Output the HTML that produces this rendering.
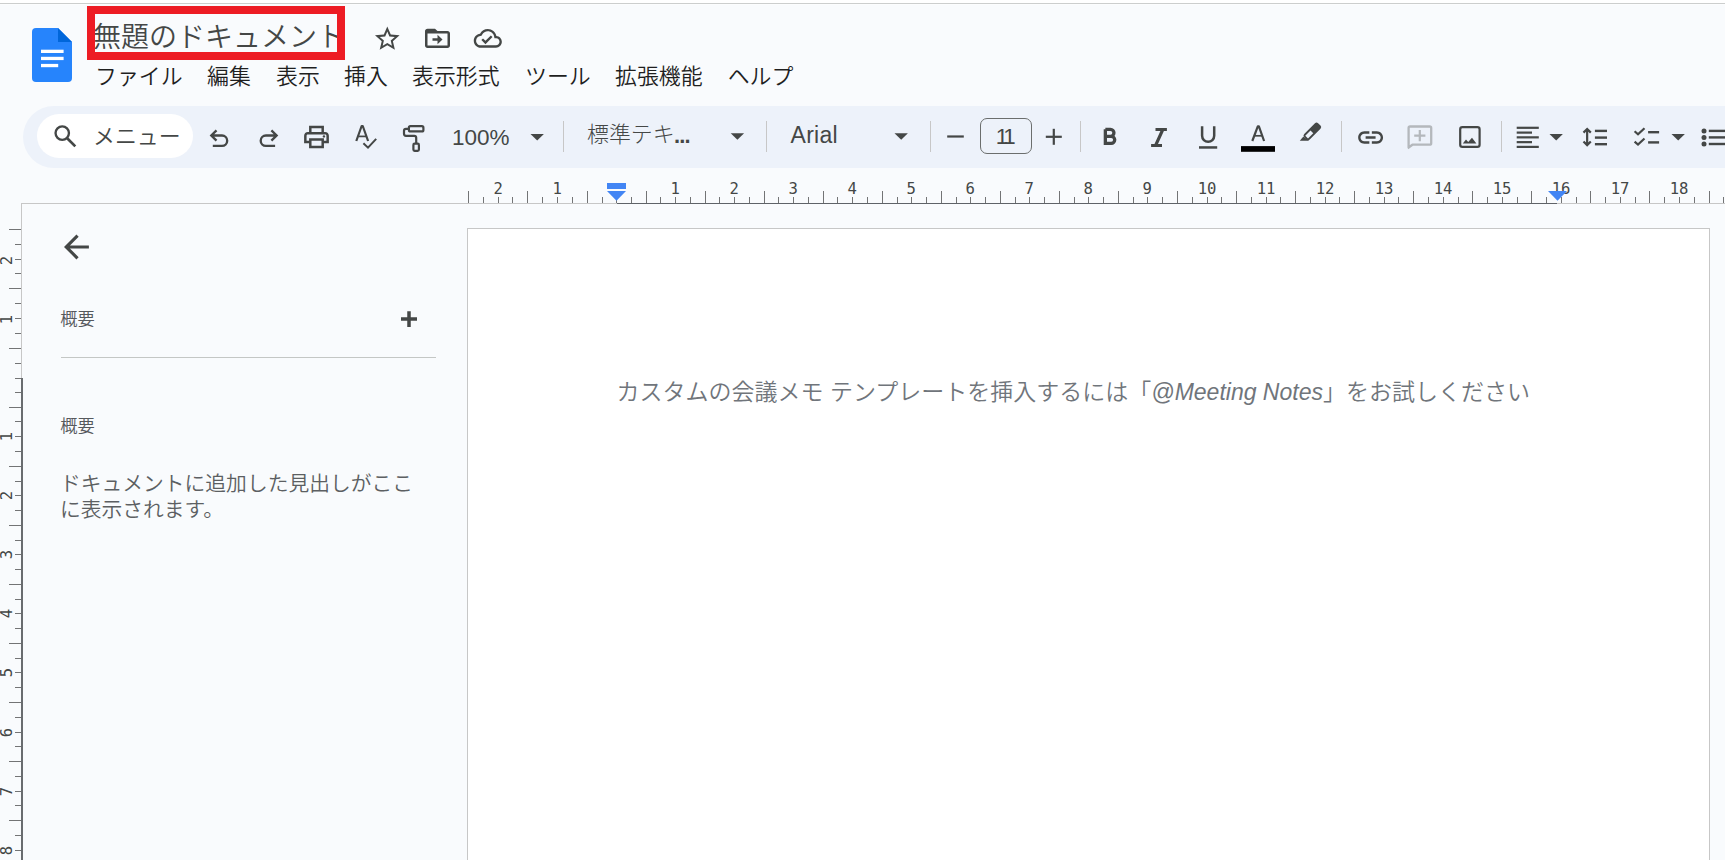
<!DOCTYPE html>
<html lang="ja">
<head>
<meta charset="utf-8">
<title>無題のドキュメント - Google ドキュメント</title>
<style>
html,body{margin:0;padding:0;}
body{width:1725px;height:860px;overflow:hidden;background:#f9fbfd;position:relative;
 font-family:"Liberation Sans","Noto Sans CJK JP",sans-serif;color:#444746;}
.abs{position:absolute;}
#topwhite{left:0;top:0;width:1725px;height:3px;background:#fff;}
#topline{left:0;top:3px;width:1725px;height:1px;background:#cccecd;box-shadow:0 1px 0 #fcfdfe;}
#title{left:93px;top:18.7px;height:38px;line-height:38px;font-size:28px;white-space:nowrap;color:#444746;font-weight:350;width:244px;overflow:hidden;}
#redbox{left:87px;top:6px;width:242px;height:38px;border:8px solid #ed1c24;}
.menu{top:60.5px;height:32px;line-height:32px;font-size:21.9px;white-space:nowrap;color:#1f1f1f;font-weight:350;}
#toolbar{left:22.5px;top:106px;width:1760px;height:62px;border-radius:31px;background:#edf2fa;}
#search{left:37px;top:114px;width:156px;height:44px;border-radius:22px;background:#fff;}
#searchtxt{left:93px;top:115.3px;height:44px;line-height:44px;font-size:21.9px;white-space:nowrap;font-weight:350;color:#444746;width:88px;overflow:hidden;}
.tsep{top:121px;width:1px;height:31px;background:#c7c7c7;}
.tbtxt{top:114px;height:44px;line-height:44px;font-size:21.9px;white-space:nowrap;color:#444746;}
#fsbox{left:980px;top:118px;width:52px;height:35.5px;border:1.3px solid #444746;border-radius:7px;box-sizing:border-box;text-align:center;line-height:36.4px;font-size:22.3px;letter-spacing:-3.2px;text-indent:-4px;color:#444746;border-color:#6b6e6d;}
#page{left:467px;top:228px;width:1243px;height:700px;background:#fff;border:1px solid #c7c7c7;box-sizing:border-box;}
#hline{left:21px;top:203px;width:1710px;height:1px;background:#c7c7c7;}
#hdark{left:617px;top:203px;width:940px;height:1px;background:#5f6368;}
#vline{left:21px;top:203px;width:1px;height:700px;background:#c7c7c7;}
#vdark{left:21px;top:378px;width:2px;height:500px;background:#696c6f;}
.ptxt{white-space:nowrap;color:#444746;font-weight:300;}
#placeholder{left:616.6px;top:372.9px;height:38px;line-height:38px;font-size:23.01px;white-space:nowrap;color:#70757b;font-weight:350;}
#placeholder i{font-style:italic;font-weight:400;}
svg{position:absolute;left:0;top:0;overflow:visible;}
</style>
</head>
<body>
<div class="abs" id="topwhite"></div>
<div class="abs" id="topline"></div>

<!-- docs logo -->
<svg width="1725" height="110" viewBox="0 0 1725 110" style="left:0.6px;top:0.4px">
  <path d="M35 28 H57 L71 42 V78 a4 4 0 0 1 -4 4 H35 a4 4 0 0 1 -4 -4 V32 a4 4 0 0 1 4 -4 Z" fill="#2684fc"/>
  <path d="M57 28 L71 42 H57 Z" fill="#0066da"/>
  <rect x="40" y="49.7" width="22.6" height="3.3" fill="#fff"/>
  <rect x="40" y="56.8" width="22.6" height="3.3" fill="#fff"/>
  <rect x="40" y="63.9" width="17.2" height="3.3" fill="#fff"/>
</svg>

<div class="abs" id="title">無題のドキュメント</div>
<div class="abs" id="redbox"></div>

<div class="abs menu" style="left:95px">ファイル</div>
<div class="abs menu" style="left:207px">編集</div>
<div class="abs menu" style="left:276px">表示</div>
<div class="abs menu" style="left:344px">挿入</div>
<div class="abs menu" style="left:412px">表示形式</div>
<div class="abs menu" style="left:525px">ツール</div>
<div class="abs menu" style="left:615px">拡張機能</div>
<div class="abs menu" style="left:727.7px">ヘルプ</div>

<div class="abs" id="toolbar"></div>
<div class="abs" id="search"></div>
<div class="abs" id="searchtxt">メニュー</div>
<div class="abs tbtxt" style="left:452px;top:115.6px;font-size:22.5px;letter-spacing:0px">100%</div>
<div class="abs tsep" style="left:563px"></div>
<div class="abs tbtxt" style="left:587px;top:113px;font-weight:300">標準テキ<span style="font-weight:700;letter-spacing:-0.9px;margin-left:-0.5px;position:relative;top:1.2px">...</span></div>
<div class="abs tsep" style="left:766px"></div>
<div class="abs tbtxt" style="left:790.5px;font-size:23px;top:113.2px;letter-spacing:0.3px">Arial</div>
<div class="abs tsep" style="left:930px"></div>
<div class="abs" id="fsbox">11</div>
<div class="abs tsep" style="left:1080px"></div>
<div class="abs tsep" style="left:1341px"></div>
<div class="abs tsep" style="left:1501px"></div>

<!-- ICONS -->
<svg id="icons" width="1725" height="400" viewBox="0 0 1725 400"><g fill="#444746">
<!-- star -->
<g transform="translate(387.3,38.1) scale(1.23) translate(-12,-11.5)"><path d="M22 9.24l-7.19-.62L12 2 9.19 8.63 2 9.24l5.46 4.73L5.82 21 12 17.27 18.18 21l-1.63-7.03L22 9.24zM12 15.4l-3.76 2.27 1-4.28-3.32-2.88 4.38-.38L12 6.1l1.71 4.04 4.38.38-3.32 2.88 1 4.28L12 15.4z"/></g>
<!-- folder move -->
<g transform="translate(437.5,38.3) scale(1.25,1.2) translate(-12,-12)"><path d="M20 6h-8l-2-2H4c-1.1 0-1.99.9-1.99 2L2 18c0 1.1.9 2 2 2h16c1.1 0 2-.9 2-2V8c0-1.1-.9-2-2-2zm0 12H4V8h16v10zm-7.99-1l4-4-4-4v3H8v2h4.01z"/></g>
<!-- cloud done -->
<g transform="translate(487.8,38.3) scale(1.17) translate(-12,-12)"><path d="M19.35 10.04C18.67 6.59 15.64 4 12 4 9.11 4 6.6 5.64 5.35 8.04 2.34 8.36 0 10.91 0 14c0 3.31 2.69 6 6 6h13c2.76 0 5-2.24 5-5 0-2.64-2.05-4.78-4.65-4.96zM19 18H6c-2.21 0-4-1.79-4-4 0-2.05 1.53-3.76 3.56-3.97l1.07-.11.5-.95C8.08 7.14 9.94 6 12 6c2.62 0 4.88 1.86 5.39 4.43l.3 1.5 1.53.11c1.56.1 2.78 1.41 2.78 2.96 0 1.65-1.35 3-3 3zm-9-3.82l-2.09-2.09L6.5 13.5 10 17l6.01-6.01-1.41-1.41z"/></g>
<!-- print -->
<g transform="translate(316.5,137) scale(1.24) translate(-12,-12)"><path d="M19 8h-1V3H6v5H5c-1.66 0-3 1.34-3 3v6h4v4h12v-4h4v-6c0-1.66-1.34-3-3-3zM8 5h8v3H8V5zm8 12v2H8v-4h8v2zm2-2v-2H6v2H4v-4c0-.55.45-1 1-1h14c.55 0 1 .45 1 1v4h-2z"/><circle cx="18" cy="11.5" r="1"/></g>
<!-- link -->
<g transform="translate(1370.6,137.5) scale(1.245) translate(-12,-12)"><path d="M3.9 12c0-1.71 1.39-3.1 3.1-3.1h4V7H7c-2.76 0-5 2.24-5 5s2.24 5 5 5h4v-1.9H7c-1.71 0-3.1-1.39-3.1-3.1zM8 13h8v-2H8v2zm9-6h-4v1.9h4c1.71 0 3.1 1.39 3.1 3.1s-1.39 3.1-3.1 3.1h-4V17h4c2.76 0 5-2.24 5-5s-2.24-5-5-5z"/></g>
<!-- align left -->
<rect x="1516.700" y="126.70" width="22.1" height="2.200"/><rect x="1516.700" y="131.50" width="15.3" height="2.200"/><rect x="1516.700" y="136.25" width="22.1" height="2.200"/><rect x="1516.700" y="141.05" width="15.3" height="2.200"/><rect x="1516.700" y="145.80" width="22.1" height="2.200"/>
<!-- B I U -->
<path d="M1105.350 129.300 V143.350 H1111.200 a3.525 3.525 0 0 0 0 -7.050 H1105.350 M1110.450 136.300 a3.500 3.500 0 0 0 0 -7 H1105.350" fill="none" stroke="#444746" stroke-width="3.300" stroke-linejoin="miter"/>
<path d="M1155.500 128.100 H1166.900 V131.100 H1163.900 L1158 143.900 H1162 V146.900 H1151.100 V143.900 H1154.500 L1160.400 131.100 H1155.500 Z"/>
<path d="M1202.1 126.200 V135.800 a6.050 6.050 0 0 0 12.100 0 V126.200" fill="none" stroke="#444746" stroke-width="2.500"/>
<rect x="1199" y="146.200" width="18.200" height="2.500"/>
<!-- dropdown arrows -->
<path d="M530.500 134 h13.400 l-6.700 6.500z"/>
<path d="M730.700 133.300 h13.400 l-6.700 6.500z"/>
<path d="M894.500 133.300 h13.400 l-6.700 6.500z"/>
<path d="M1549.500 134 h13.400 l-6.700 6.500z"/>
<path d="M1671.500 134 h13.400 l-6.700 6.500z"/>
<!-- minus plus -->
<rect x="947.200" y="135.400" width="16.600" height="2.200"/>
<rect x="1045.800" y="135.700" width="16" height="2.200"/><rect x="1052.700" y="128.800" width="2.200" height="16"/>
<!-- highlighter -->
<g transform="translate(1312.350,131.300) rotate(-45)"><rect x="-9.800" y="-3.900" width="19.600" height="7.800" rx="2.200"/><rect x="-8.100" y="-1.950" width="7.400" height="3.900" fill="#edf2fa"/></g>
<path d="M1299.800 140.800 H1309.100 L1303.400 136.400z"/>
<!-- bullets list -->
<circle cx="1704" cy="130.900" r="2.500"/><circle cx="1704" cy="137.400" r="2.500"/><circle cx="1704" cy="144" r="2.500"/>
<rect x="1708.800" y="129.700" width="20" height="2.400"/><rect x="1708.800" y="136.200" width="20" height="2.400"/><rect x="1708.800" y="142.800" width="20" height="2.400"/>
<!-- text color bar -->
<rect x="1241" y="146.100" width="34" height="5.700" fill="#000"/>
<!-- line spacing lines, checklist lines -->
<rect x="1594.900" y="129.700" width="12.100" height="2.400"/><rect x="1594.900" y="136.400" width="12.100" height="2.400"/><rect x="1594.900" y="143" width="12.100" height="2.400"/>
<rect x="1648.100" y="131" width="11" height="2.400"/><rect x="1648.100" y="141.200" width="11" height="2.400"/>
</g>
<g fill="none" stroke="#444746" stroke-width="2.350">
<!-- search -->
<circle cx="62.250" cy="133.100" r="6.700"/><path d="M67.200 138.200 L75.300 146.400" stroke-width="2.700"/>
<!-- undo redo -->
<path d="M216.500 130.400 L211.300 135.500 L216.500 140.700 M211.800 135.500 H222 a5.200 5.200 0 0 1 0 10.400 H212.800"/>
<path d="M271.400 130.400 L276.600 135.500 L271.400 140.700 M276.100 135.500 H265.900 a5.200 5.200 0 0 0 0 10.400 H275.100"/>
<!-- spellcheck -->
<path d="M356.300 141 L361.650 126 H362.750 L368.100 141" stroke-width="2.200" stroke-linejoin="round"/><path d="M358.300 136.400 H366.100" stroke-width="1.700"/>
<path d="M363.400 143.200 L368 147.600 L376.200 138.900" stroke-width="2"/>
<!-- paint roller -->
<rect x="408.900" y="126.200" width="14.500" height="5.200" rx="1.500" stroke-width="2.200"/>
<path d="M408.900 128.800 H406 a2 2 0 0 0 -2 2 V133.800 a2 2 0 0 0 2 2 H414.200 a2 2 0 0 1 2 2 V143" stroke-width="2.200"/>
<rect x="413.400" y="143.700" width="5.500" height="7.100" rx="1.200" stroke-width="2.200"/>
<!-- text color A -->
<path d="M1252.300 141 L1257.800 126.400 H1258.900 L1264.100 141" stroke-width="2.200" stroke-linejoin="round"/><path d="M1254.600 135.800 H1262" stroke-width="1.700"/>
<!-- image -->
<rect x="1460.200" y="127.200" width="19.400" height="19.700" rx="2.200" stroke-width="2.200"/>
<!-- line spacing arrows -->
<path d="M1587.150 129.500 V144.600 M1583.500 132.600 L1587.150 129 L1590.800 132.600 M1583.500 141.500 L1587.150 145.100 L1590.800 141.500" stroke-width="2.200"/>
<!-- checklist checks -->
<path d="M1634.600 131.300 L1638 134.300 L1644.500 128.200 M1634.600 141.600 L1638 144.600 L1644.500 138.500" stroke-width="2.200"/>
</g>
<!-- image mountains -->
<path d="M1462.800 143.500 L1466 139.500 L1468.200 142.100 L1472 137.700 L1476.400 143.500z" fill="#444746"/>
<!-- add comment (disabled) -->
<g fill="none" stroke="#b4b8bc" stroke-width="2.300">
<path d="M1408.600 147.500 V128 a1.500 1.500 0 0 1 1.500 -1.500 H1429.700 a1.500 1.500 0 0 1 1.500 1.500 V143.200 a1.500 1.500 0 0 1 -1.500 1.500 H1412.400 Z" stroke-linejoin="round"/>
<path d="M1414.200 135.600 H1425.400 M1419.800 130 V141.200" stroke-width="2.200"/><path d="M1408 145 V149.200 L1412.400 145 Z" fill="#b4b8bc" stroke="none"/>
</g>
<!-- back arrow, plus in panel -->
<g transform="translate(76.450,246.950) scale(1.5560) translate(-12,-12)"><path fill="#444746" d="M20 11H7.830l5.590-5.590L12 4l-8 8 8 8 1.410-1.410L7.830 13H20v-2z"/></g>
<path fill="#444746" d="M401 317.300 h16 v3.500 h-16z M407.250 311.200 h3.500 v15.700 h-3.500z"/>
</svg>

<div class="abs" id="page"></div>
<div class="abs" id="hline"></div>
<div class="abs" id="hdark"></div>
<div class="abs" id="vline"></div>
<div class="abs" id="vdark"></div>
<svg id="rulers" width="1725" height="860" viewBox="0 0 1725 860">
<g fill="#737475" shape-rendering="crispEdges"><rect x="468" y="191" width="1" height="12"/><rect x="483" y="197" width="1" height="6"/><rect x="498" y="197" width="1" height="6"/><rect x="512" y="197" width="1" height="6"/><rect x="527" y="191" width="1" height="12"/><rect x="542" y="197" width="1" height="6"/><rect x="557" y="197" width="1" height="6"/><rect x="572" y="197" width="1" height="6"/><rect x="587" y="191" width="1" height="12"/><rect x="602" y="197" width="1" height="6"/><rect x="616" y="197" width="1" height="6"/><rect x="631" y="197" width="1" height="6"/><rect x="646" y="191" width="1" height="12"/><rect x="660" y="197" width="1" height="6"/><rect x="675" y="197" width="1" height="6"/><rect x="690" y="197" width="1" height="6"/><rect x="705" y="191" width="1" height="12"/><rect x="719" y="197" width="1" height="6"/><rect x="734" y="197" width="1" height="6"/><rect x="749" y="197" width="1" height="6"/><rect x="764" y="191" width="1" height="12"/><rect x="778" y="197" width="1" height="6"/><rect x="793" y="197" width="1" height="6"/><rect x="808" y="197" width="1" height="6"/><rect x="823" y="191" width="1" height="12"/><rect x="837" y="197" width="1" height="6"/><rect x="852" y="197" width="1" height="6"/><rect x="867" y="197" width="1" height="6"/><rect x="882" y="191" width="1" height="12"/><rect x="897" y="197" width="1" height="6"/><rect x="911" y="197" width="1" height="6"/><rect x="926" y="197" width="1" height="6"/><rect x="941" y="191" width="1" height="12"/><rect x="956" y="197" width="1" height="6"/><rect x="970" y="197" width="1" height="6"/><rect x="985" y="197" width="1" height="6"/><rect x="1000" y="191" width="1" height="12"/><rect x="1015" y="197" width="1" height="6"/><rect x="1029" y="197" width="1" height="6"/><rect x="1044" y="197" width="1" height="6"/><rect x="1059" y="191" width="1" height="12"/><rect x="1074" y="197" width="1" height="6"/><rect x="1088" y="197" width="1" height="6"/><rect x="1103" y="197" width="1" height="6"/><rect x="1118" y="191" width="1" height="12"/><rect x="1133" y="197" width="1" height="6"/><rect x="1147" y="197" width="1" height="6"/><rect x="1162" y="197" width="1" height="6"/><rect x="1177" y="191" width="1" height="12"/><rect x="1192" y="197" width="1" height="6"/><rect x="1207" y="197" width="1" height="6"/><rect x="1221" y="197" width="1" height="6"/><rect x="1236" y="191" width="1" height="12"/><rect x="1251" y="197" width="1" height="6"/><rect x="1266" y="197" width="1" height="6"/><rect x="1280" y="197" width="1" height="6"/><rect x="1295" y="191" width="1" height="12"/><rect x="1310" y="197" width="1" height="6"/><rect x="1325" y="197" width="1" height="6"/><rect x="1339" y="197" width="1" height="6"/><rect x="1354" y="191" width="1" height="12"/><rect x="1369" y="197" width="1" height="6"/><rect x="1384" y="197" width="1" height="6"/><rect x="1398" y="197" width="1" height="6"/><rect x="1413" y="191" width="1" height="12"/><rect x="1428" y="197" width="1" height="6"/><rect x="1443" y="197" width="1" height="6"/><rect x="1458" y="197" width="1" height="6"/><rect x="1472" y="191" width="1" height="12"/><rect x="1487" y="197" width="1" height="6"/><rect x="1502" y="197" width="1" height="6"/><rect x="1517" y="197" width="1" height="6"/><rect x="1531" y="191" width="1" height="12"/><rect x="1546" y="197" width="1" height="6"/><rect x="1561" y="197" width="1" height="6"/><rect x="1576" y="197" width="1" height="6"/><rect x="1590" y="191" width="1" height="12"/><rect x="1605" y="197" width="1" height="6"/><rect x="1620" y="197" width="1" height="6"/><rect x="1635" y="197" width="1" height="6"/><rect x="1649" y="191" width="1" height="12"/><rect x="1664" y="197" width="1" height="6"/><rect x="1679" y="197" width="1" height="6"/><rect x="1694" y="197" width="1" height="6"/><rect x="1709" y="191" width="1" height="12"/><rect x="1723" y="197" width="1" height="6"/></g><g font-family="DejaVu Sans Mono, monospace" font-size="15.6" fill="#444746" text-anchor="middle"><text x="498.1" y="193.8">2</text><text x="557.1" y="193.8">1</text><text x="675.1" y="193.8">1</text><text x="734.1" y="193.8">2</text><text x="793.1" y="193.8">3</text><text x="852.1" y="193.8">4</text><text x="911.1" y="193.8">5</text><text x="970.1" y="193.8">6</text><text x="1029.1" y="193.8">7</text><text x="1088.1" y="193.8">8</text><text x="1147.1" y="193.8">9</text><text x="1207.1" y="193.8">10</text><text x="1266.1" y="193.8">11</text><text x="1325.1" y="193.8">12</text><text x="1384.1" y="193.8">13</text><text x="1443.1" y="193.8">14</text><text x="1502.1" y="193.8">15</text><text x="1561.1" y="193.8">16</text><text x="1620.1" y="193.8">17</text><text x="1679.1" y="193.8">18</text></g>
<g fill="#737475" shape-rendering="crispEdges"><rect x="9" y="229" width="12" height="1"/><rect x="15" y="244" width="6" height="1"/><rect x="15" y="259" width="6" height="1"/><rect x="15" y="273" width="6" height="1"/><rect x="9" y="288" width="12" height="1"/><rect x="15" y="303" width="6" height="1"/><rect x="15" y="318" width="6" height="1"/><rect x="15" y="333" width="6" height="1"/><rect x="9" y="348" width="12" height="1"/><rect x="15" y="363" width="6" height="1"/><rect x="15" y="378" width="6" height="1"/><rect x="15" y="392" width="6" height="1"/><rect x="9" y="407" width="12" height="1"/><rect x="15" y="421" width="6" height="1"/><rect x="15" y="436" width="6" height="1"/><rect x="15" y="451" width="6" height="1"/><rect x="9" y="466" width="12" height="1"/><rect x="15" y="481" width="6" height="1"/><rect x="15" y="495" width="6" height="1"/><rect x="15" y="510" width="6" height="1"/><rect x="9" y="525" width="12" height="1"/><rect x="15" y="540" width="6" height="1"/><rect x="15" y="554" width="6" height="1"/><rect x="15" y="569" width="6" height="1"/><rect x="9" y="584" width="12" height="1"/><rect x="15" y="599" width="6" height="1"/><rect x="15" y="613" width="6" height="1"/><rect x="15" y="628" width="6" height="1"/><rect x="9" y="643" width="12" height="1"/><rect x="15" y="658" width="6" height="1"/><rect x="15" y="672" width="6" height="1"/><rect x="15" y="687" width="6" height="1"/><rect x="9" y="702" width="12" height="1"/><rect x="15" y="717" width="6" height="1"/><rect x="15" y="732" width="6" height="1"/><rect x="15" y="746" width="6" height="1"/><rect x="9" y="761" width="12" height="1"/><rect x="15" y="776" width="6" height="1"/><rect x="15" y="791" width="6" height="1"/><rect x="15" y="805" width="6" height="1"/><rect x="9" y="820" width="12" height="1"/><rect x="15" y="835" width="6" height="1"/><rect x="15" y="850" width="6" height="1"/><rect x="15" y="864" width="6" height="1"/></g><g font-family="DejaVu Sans Mono, monospace" font-size="15.6" fill="#444746" text-anchor="middle"><text transform="translate(11.6,260.6) rotate(-90)" x="0" y="0">2</text><text transform="translate(11.6,319.6) rotate(-90)" x="0" y="0">1</text><text transform="translate(11.6,436.5) rotate(-90)" x="0" y="0">1</text><text transform="translate(11.6,495.5) rotate(-90)" x="0" y="0">2</text><text transform="translate(11.6,554.5) rotate(-90)" x="0" y="0">3</text><text transform="translate(11.6,613.5) rotate(-90)" x="0" y="0">4</text><text transform="translate(11.6,672.5) rotate(-90)" x="0" y="0">5</text><text transform="translate(11.6,732.5) rotate(-90)" x="0" y="0">6</text><text transform="translate(11.6,791.5) rotate(-90)" x="0" y="0">7</text><text transform="translate(11.6,850.5) rotate(-90)" x="0" y="0">8</text></g>
<path d="M607 183 h19 v6 h-19 z M607 191 h19 l-9.5 9.8 z" fill="#4285f4"/>
<path d="M1548 191 h19 l-9.5 9.800 z" fill="#4285f4"/>
</svg>

<!-- left panel -->
<div class="abs ptxt" style="left:60.3px;top:305.5px;font-size:17.3px;line-height:26px;font-weight:350;color:#56595d;">概要</div>
<div class="abs ptxt" style="left:60.3px;top:412.5px;font-size:17.3px;line-height:26px;font-weight:350;color:#56595d;">概要</div>
<div class="abs" style="left:61px;top:357px;width:375px;height:1px;background:#c4c7c5;"></div>
<div class="abs ptxt" style="left:60px;top:471.3px;font-size:20.77px;line-height:26px;font-weight:350;color:#5c5f62;">ドキュメントに追加した見出しがここ<br>に表示されます。</div>

<div class="abs" id="placeholder">カスタムの会議メモ テンプレートを挿入するには「<i>@Meeting Notes</i>」をお試しください</div>
</body>
</html>
